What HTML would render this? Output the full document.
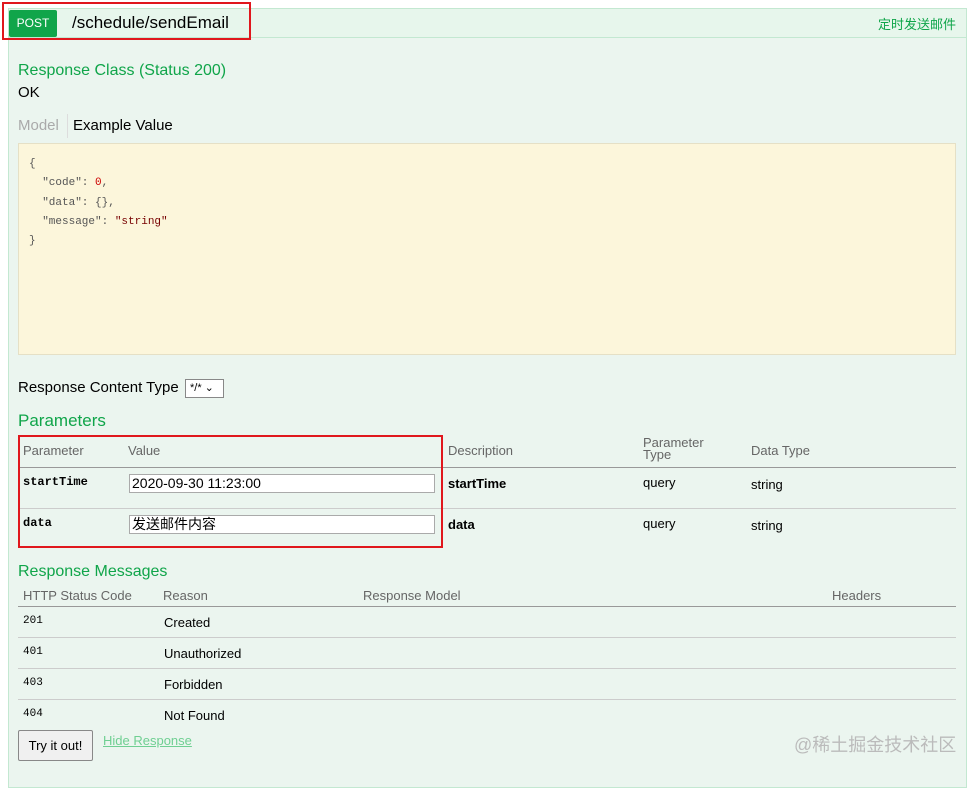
<!DOCTYPE html>
<html><head><meta charset="utf-8"><style>
*{margin:0;padding:0;box-sizing:border-box}
body{width:976px;height:773px;background:#fff;position:relative;overflow:hidden;font-family:"Liberation Sans","Noto Sans CJK SC",sans-serif;font-size:14px;color:#000}
.a{position:absolute;white-space:nowrap}
.panel{position:absolute;left:8px;top:8px;width:959px;height:780px;background:#ebf5ef;border:1px solid #c3e8d1}
.hdr{position:absolute;left:8px;top:8px;width:959px;height:30px;background:#e7f6ec;border:1px solid #c3e8d1}
.g{color:#10a54a}
.h{font-size:16px;color:#10a54a}
.mono{font-family:"Liberation Mono",monospace;font-size:11px}
.line{position:absolute;height:1px;background:#ccc}
.inp{position:absolute;height:19px;border:1px solid #aaa;background:#fff;font-size:14px;padding:0 2px;line-height:17px}
.th{color:#666;font-size:13px}
</style></head><body>
<div class="panel"></div>
<div class="hdr"></div>
<div class="a" style="left:9px;top:10px;width:48px;height:27px;background:#10a54a;border-radius:2px;color:#fff;font-size:12px;line-height:27px;text-align:center">POST</div>
<div class="a" style="left:72px;top:13px;font-size:17px">/schedule/sendEmail</div>
<div class="a" style="left:2px;top:2px;width:249px;height:38px;border:2px solid #e0171d"></div>
<div class="a g" style="left:878px;top:14px;font-size:13px">定时发送邮件</div>

<div class="a h" style="left:18px;top:62px">Response Class (Status 200)</div>
<div class="a" style="left:18px;top:84px;font-size:15px">OK</div>
<div class="a" style="left:18px;top:117px;color:#aaa;font-size:15px">Model</div>
<div class="a" style="left:67px;top:114px;width:1px;height:24px;background:#ddd"></div>
<div class="a" style="left:73px;top:117px;font-size:15px">Example Value</div>
<div class="a" style="left:18px;top:143px;width:938px;height:212px;background:#fcf6db;border:1px solid #e5e0c6"></div>
<pre class="a mono" style="left:29px;top:155px;line-height:19.3px;color:#555;white-space:pre">{
  "code": <span style="color:#c00">0</span>,
  "data": {},
  "message": <span style="color:#700">"string"</span>
}</pre>
<div class="a" style="left:18px;top:379px;font-size:15px">Response Content Type</div>
<div class="a" style="left:185px;top:379px;width:39px;height:19px;border:1px solid #888;background:#fff;font-size:11px;padding-left:4px;line-height:17px">*/* ⌄</div>
<div class="a h" style="left:18px;top:411px;font-size:17px">Parameters</div>

<div class="a th" style="left:23px;top:443px">Parameter</div>
<div class="a th" style="left:128px;top:443px">Value</div>
<div class="a th" style="left:448px;top:443px">Description</div>
<div class="a th" style="left:643px;top:437px;line-height:12px">Parameter<br>Type</div>
<div class="a th" style="left:751px;top:443px">Data Type</div>
<div class="line" style="left:18px;top:467px;width:938px;background:#999"></div>
<div class="a mono" style="left:23px;top:475px;font-weight:bold;font-size:12px">startTime</div>
<div class="inp" style="left:129px;top:474px;width:306px">2020-09-30 11:23:00</div>
<div class="a" style="left:448px;top:476px;font-weight:bold;font-size:13px">startTime</div>
<div class="a" style="left:643px;top:475px;font-size:13px">query</div>
<div class="a" style="left:751px;top:477px;font-size:13px">string</div>
<div class="line" style="left:18px;top:508px;width:938px"></div>
<div class="a mono" style="left:23px;top:516px;font-weight:bold;font-size:12px">data</div>
<div class="inp" style="left:129px;top:515px;width:306px">发送邮件内容</div>
<div class="a" style="left:448px;top:517px;font-weight:bold;font-size:13px">data</div>
<div class="a" style="left:643px;top:516px;font-size:13px">query</div>
<div class="a" style="left:751px;top:518px;font-size:13px">string</div>
<div class="a" style="left:18px;top:435px;width:425px;height:113px;border:2px solid #e0171d"></div>

<div class="a h" style="left:18px;top:563px">Response Messages</div>
<div class="a th" style="left:23px;top:588px">HTTP Status Code</div>
<div class="a th" style="left:163px;top:588px">Reason</div>
<div class="a th" style="left:363px;top:588px">Response Model</div>
<div class="a th" style="left:832px;top:588px">Headers</div>
<div class="line" style="left:18px;top:606px;width:938px;background:#999"></div>
<div class="a mono" style="left:23px;top:615px">201</div><div class="a" style="left:164px;top:615px;font-size:13px">Created</div>
<div class="line" style="left:18px;top:637px;width:938px"></div>
<div class="a mono" style="left:23px;top:646px">401</div><div class="a" style="left:164px;top:646px;font-size:13px">Unauthorized</div>
<div class="line" style="left:18px;top:668px;width:938px"></div>
<div class="a mono" style="left:23px;top:677px">403</div><div class="a" style="left:164px;top:677px;font-size:13px">Forbidden</div>
<div class="line" style="left:18px;top:699px;width:938px"></div>
<div class="a mono" style="left:23px;top:708px">404</div><div class="a" style="left:164px;top:708px;font-size:13px">Not Found</div>
<div class="a" style="left:18px;top:730px;width:75px;height:31px;border:1px solid #888;border-radius:2px;background:#f0f0f0;font-size:13px;text-align:center;line-height:29px">Try it out!</div>
<div class="a" style="left:103px;top:733px;font-size:13px;color:#6fcf92;text-decoration:underline">Hide Response</div>
<div class="a" style="left:794px;top:731px;font-size:18px;color:#bbb">@稀土掘金技术社区</div>
</body></html>
